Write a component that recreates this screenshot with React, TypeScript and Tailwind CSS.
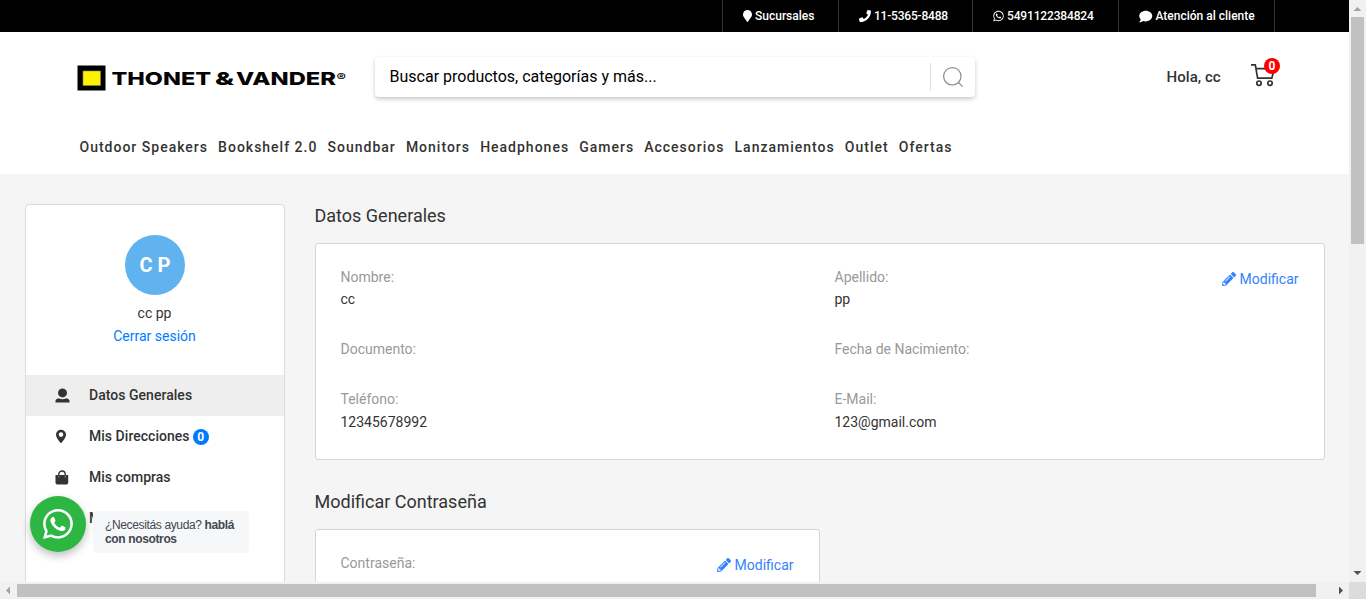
import React from "react";
import { FaComment, FaMapMarker, FaPencilAlt, FaPhone, FaWhatsapp } from "react-icons/fa";
import { BsWhatsapp } from "react-icons/bs";

const categories = [
  "Outdoor Speakers", "Bookshelf 2.0", "Soundbar", "Monitors", "Headphones",
  "Gamers", "Accesorios", "Lanzamientos", "Outlet", "Ofertas",
];

function TopBar() {
  const item = "flex items-center border-l border-[#333] pl-5 text-xs font-medium text-white";
  return (
    <div className="flex h-8 shrink-0 bg-black pl-[722px]">
      <div className={`${item} w-[116px]`}><FaMapMarker className="mr-[3px] h-3 w-[9px]" />Sucursales</div>
      <div className={`${item} w-[134px] tracking-[-0.2px]`}><FaPhone className="mr-[3px] h-3 w-3" />11-5365-8488</div>
      <div className={`${item} w-[146px] tracking-[-0.15px]`}><FaWhatsapp className="mr-[3px] h-3 w-[11px]" />5491122384824</div>
      <div className={`${item} w-[157px] border-r`}><FaComment className="mr-[3px] h-[13px] w-[13.5px]" />Atención al cliente</div>
    </div>
  );
}

function Logo() {
  return (
    <svg className="h-[26px] w-[270px]" viewBox="0 0 270 26">
      <rect x="0.5" y="0.5" width="28" height="25" fill="#000" />
      <rect x="6" y="6" width="17.5" height="14.5" fill="#fff200" stroke="#8a8a50" strokeWidth="0.6" />
      <g fontFamily="Inter, sans-serif" fontWeight="800" fontSize="18" fill="#050505">
        <text x="34.500" y="19.700" textLength="99.500" lengthAdjust="spacingAndGlyphs">THONET</text>
        <text x="138" y="19.700" textLength="19" lengthAdjust="spacingAndGlyphs">&amp;</text>
        <text x="159" y="19.700" textLength="100" lengthAdjust="spacingAndGlyphs">VANDER</text>
        <text x="259.500" y="16" fontSize="11" textLength="9.500" lengthAdjust="spacingAndGlyphs">®</text>
      </g>
    </svg>
  );
}

function Header() {
  return (
    <header className="h-[142px] shrink-0 bg-white">
      <div className="flex items-start pt-[25px] pl-[77px]">
        <div className="mt-2 w-[298px]"><Logo /></div>
        <div className="flex h-10 w-[600px] items-center rounded bg-white pl-[14.5px] text-base text-black shadow-[0_2px_4px_rgba(0,0,0,0.22)]">
          <span className="flex-1 leading-[38px]">Buscar productos, categorías y más...</span>
          <span className="flex h-7 w-[45px] items-center border-l border-[#ddd] pl-3">
            <svg className="h-5 w-5" viewBox="0 0 20 20" fill="none" stroke="#8c8c8c" strokeWidth="1.2">
              <circle cx="9.3" cy="9.3" r="8.7" /><path d="M15.5 15.5l4.2 4.2" />
            </svg>
          </span>
        </div>
        <span className="mt-2 ml-[191.5px] w-[84.5px] text-[15px] leading-6 font-medium tracking-[0.05px] text-[#333]">Hola, cc</span>
        <div className="relative mt-[6px] h-6 w-7">
          <svg className="h-6 w-6" viewBox="0 0 24 24" fill="none" stroke="#333" strokeWidth="1.7">
            <path d="M0 1.8h4.3l2.3 13.4h14.2l2.5-9.6H5" />
            <circle cx="8" cy="20.2" r="2.2" /><circle cx="19" cy="20.2" r="2.2" />
          </svg>
          <span className="absolute top-[-5px] left-[13px] flex h-4 w-4 items-center justify-center rounded-full bg-[#f00] text-xs font-bold text-white">0</span>
        </div>
      </div>
      <nav className="mt-[39px] flex gap-[10.1px] pl-[79.5px] text-sm leading-[22px] font-medium tracking-[1px] text-[#333]">
        {categories.map((name) => <span key={name} className="whitespace-nowrap">{name}</span>)}
      </nav>
    </header>
  );
}

function PersonIcon() {
  return (
    <svg className="h-[15px] w-[15px]" viewBox="0 0 15 15" fill="#333">
      <circle cx="7.5" cy="4.9" r="4.5" />
      <path d="M.5 14.400v-1.700q0-1.700 3.200-2.500Q7.500 12.300 11.300 10.200q3.200.8 3.200 2.500v1.700z" />
    </svg>
  );
}

function PinIcon() {
  return (
    <svg className="h-[15px] w-[12px]" viewBox="0 0 12 15" fill="#333" fillRule="evenodd">
      <path d="M6 .7a5 5 0 0 0-5 5C1 9.200 6 14.200 6 14.200S11 9.200 11 5.700a5 5 0 0 0-5-5zm0 2.600a2.300 2.300 0 1 1 0 4.600 2.300 2.300 0 0 1 0-4.600z" />
    </svg>
  );
}

function BagIcon() {
  return (
    <svg className="h-[15px] w-[14px]" viewBox="0 0 14 15">
      <path d="M3.800 6.500V4.200a3.200 3.200 0 0 1 6.400 0v2.300" fill="none" stroke="#333" strokeWidth="1.400" />
      <path d="M.5 5h12.700v7.700a1.800 1.800 0 0 1-1.800 1.800H2.300a1.800 1.800 0 0 1-1.800-1.800z" fill="#333" />
      <path d="M3.800 5.500v2M10.200 5.500v2" stroke="#aaa" strokeWidth=".8" />
    </svg>
  );
}

function MenuItem({ icon, label, active, count }: { icon?: React.ReactNode; label: string; active?: boolean; count?: number }) {
  return (
    <div className={`flex h-[41px] items-center pl-[29px] text-sm font-medium text-[#333] ${active ? "bg-[#eee]" : ""}`}>
      <span className="flex w-[34px]">{icon}</span>
      <span className="pb-[2px] tracking-[0.03px]">{label}</span>
      {count !== undefined && (
        <span className="ml-[3px] flex h-4 w-4 items-center justify-center rounded-full bg-[#007bff] text-xs font-bold text-white">{count}</span>
      )}
    </div>
  );
}

function Sidebar() {
  return (
    <aside className="h-[420px] w-[260px] rounded border border-[#dcdcdc] bg-white">
      <div className="flex h-[170px] flex-col items-center pt-[30px] text-sm">
        <div className="flex h-[60px] w-[60px] items-center justify-center rounded-full bg-[#60b3ef] text-xl font-bold text-white">C P</div>
        <div className="mt-[7px] mr-[1px] leading-[23px] text-[#333]">cc pp</div>
        <a className="mr-[1px] leading-[23px] text-[#007bff]">Cerrar sesión</a>
      </div>
      <MenuItem icon={<PersonIcon />} label="Datos Generales" active />
      <MenuItem icon={<PinIcon />} label="Mis Direcciones" count={0} />
      <MenuItem icon={<BagIcon />} label="Mis compras" />
      <MenuItem label="M" />
    </aside>
  );
}

function Field({ label, value }: { label: string; value?: string }) {
  return (
    <div className="w-[494px] text-sm leading-[22.5px]">
      <div className="text-[#999]">{label}</div>
      {value && <div className="text-[#333]">{value}</div>}
    </div>
  );
}

function EditLink() {
  return (
    <a className="mt-[2px] flex h-[22px] items-center gap-[3.5px] text-sm text-[#3483fa]">
      <FaPencilAlt className="h-[14px] w-[14px]" />Modificar
    </a>
  );
}

function Content() {
  return (
    <section className="w-[1010px]">
      <h2 className="h-[39px] pt-[1px] text-lg leading-[22px] text-[#333]"><span className="-ml-[0.5px]">Datos Generales</span></h2>
      <div className="flex h-[217px] justify-between rounded-[3px] border border-[#d5d5d5] bg-white pt-[21.8px] pr-[25.5px] pl-[24.5px]">
        <div className="flex shrink-0 flex-col">
          <div className="flex h-[72.2px]"><Field label="Nombre:" value="cc" /><div className="w-[300px]"><Field label="Apellido:" value="pp" /></div></div>
          <div className="flex h-[50.100px]"><Field label="Documento:" /><div className="w-[300px]"><Field label="Fecha de Nacimiento:" /></div></div>
          <div className="flex"><Field label="Teléfono:" value="12345678992" /><div className="w-[300px]"><Field label="E-Mail:" value="123@gmail.com" /></div></div>
        </div>
        <EditLink />
      </div>
      <h2 className="mt-[30px] h-[39px] pt-[1px] text-lg leading-[22px] text-[#333]"><span className="-ml-[0.5px]">Modificar Contraseña</span></h2>
      <div className="flex h-[140px] w-[505px] justify-between rounded-[3px] border border-[#d5d5d5] bg-white pt-[22px] pr-[25.5px] pl-[24.5px]">
        <div className="text-sm leading-[22.5px] text-[#999]">Contraseña:</div>
        <EditLink />
      </div>
    </section>
  );
}

function HelpChat() {
  return (
    <div className="absolute top-[496px] left-[30px] flex">
      <div className="flex h-14 w-14 items-center justify-center rounded-full bg-[#2db742] shadow-[0_4px_8px_rgba(0,0,0,0.25)]">
        <BsWhatsapp className="h-[30px] w-[30px] text-white" />
      </div>
      <div className="mt-[15px] ml-[7px] h-[42px] w-[156px] rounded bg-[#f5f7f9] pt-[7px] pl-3 font-['Liberation_Sans',sans-serif] text-xs leading-[14px] tracking-[-0.36px] text-[#43474e]">
        ¿Necesitás ayuda? <b className="font-bold">hablá<br />con nosotros</b>
      </div>
    </div>
  );
}

export default function App() {
  return (
    <div className="grid h-[599px] w-[1366px] grid-cols-[1349px_17px] grid-rows-[582px_17px] overflow-hidden bg-[#f1f1f1] font-[Roboto,sans-serif]">
      <main className="relative flex flex-col overflow-hidden bg-[#f5f5f5]">
        <TopBar />
        <Header />
        <div className="flex items-start gap-[30px] pt-[30px] pl-[25px]">
          <Sidebar />
          <Content />
        </div>
        <HelpChat />
      </main>
      <div className="flex flex-col items-center justify-between">
        <svg className="h-[17px] w-[17px]" viewBox="0 0 17 17"><path d="M4.500 11h8L8.500 7z" fill="#a3a3a3" /></svg>
        <div className="mb-auto h-[227px] w-[13px] bg-[#c1c1c1]" />
        <svg className="h-[17px] w-[17px]" viewBox="0 0 17 17"><path d="M4.500 6h8L8.500 10z" fill="#505050" /></svg>
      </div>
      <div className="flex items-center justify-between">
        <svg className="h-[17px] w-[17px]" viewBox="0 0 17 17"><path d="M10 4.500v8L6 8.500z" fill="#a3a3a3" /></svg>
        <div className="mr-auto h-[13px] w-[1299px] bg-[#c1c1c1]" />
        <svg className="h-[17px] w-[17px]" viewBox="0 0 17 17"><path d="M7 4.500v8l4-4z" fill="#505050" /></svg>
      </div>
      <div className="bg-[#dcdcdc]" />
    </div>
  );
}
